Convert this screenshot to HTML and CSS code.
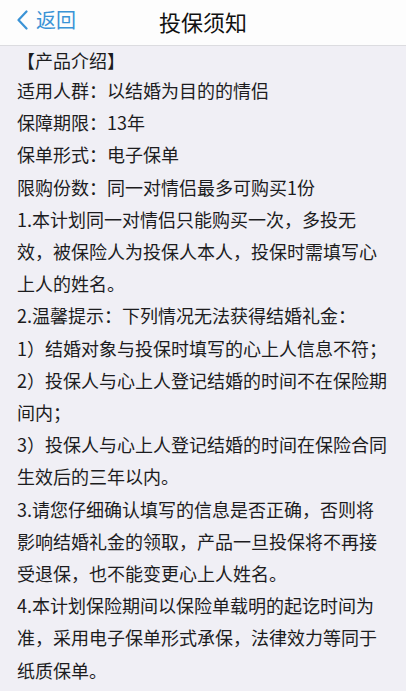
FILE: index.html
```html
<!DOCTYPE html>
<html lang="zh-CN">
<head>
<meta charset="utf-8">
<title>投保须知</title>
<link rel="stylesheet" href="styles.css">
</head>
<body>
<header class="nav">
  <div class="nav-left">
    <a class="back" href="#">
      <svg class="chev" width="12" height="20" viewBox="0 0 12 20"><polyline points="10.5,1.5 2.5,10 10.5,18.5" fill="none" stroke="currentColor" stroke-width="2.2" stroke-linecap="round" stroke-linejoin="round"/></svg>
      <span>返回</span>
    </a>
  </div>
  <h1 class="title">投保须知</h1>
  <div class="nav-right"></div>
</header>
<main class="content">
  <p class="heading">【产品介绍】</p>
  <p>适用人群：以结婚为目的的情侣</p>
  <p>保障期限：13年</p>
  <p>保单形式：电子保单</p>
  <p>限购份数：同一对情侣最多可购买1份</p>
  <p>1.本计划同一对情侣只能购买一次，多投无效，被保险人为投保人本人，投保时需填写心上人的姓名。</p>
  <p>2.温馨提示：下列情况无法获得结婚礼金：</p>
  <p>1）结婚对象与投保时填写的心上人信息不符；</p>
  <p>2）投保人与心上人登记结婚的时间不在保险期间内；</p>
  <p>3）投保人与心上人登记结婚的时间在保险合同生效后的三年以内。</p>
  <p>3.请您仔细确认填写的信息是否正确，否则将影响结婚礼金的领取，产品一旦投保将不再接受退保，也不能变更心上人姓名。</p>
  <p>4.本计划保险期间以保险单载明的起讫时间为准，采用电子保单形式承保，法律效力等同于纸质保单。</p>
</main>
</body>
</html>
```
FILE: styles.css
```css
html, body {
  margin: 0;
  padding: 0;
  background: #f0eff5;
  font-family: "Noto Sans CJK SC", "Noto Sans", sans-serif;
  color: #1c1c1e;
}

.nav {
  display: grid;
  grid-template-columns: 1fr auto 1fr;
  align-items: center;
  height: 45px;
  background: #fdfdfd;
  border-bottom: 1px solid #dcdce0;
}

.nav-left {
  padding-left: 16px;
  padding-bottom: 3px;
}

.back {
  display: inline-flex;
  align-items: center;
  gap: 8px;
  color: #3a93d6;
  text-decoration: none;
  font-size: 20px;
  line-height: 24px;
}

.chev {
  display: block;
}

.title {
  margin: 0;
  padding-bottom: 4px;
  font-size: 22px;
  font-weight: 400;
  line-height: 26px;
  color: #111;
}

.content {
  padding: 0 17px;
}

.content p {
  margin: 0;
  font-size: 18px;
  line-height: 32.2px;
}

.content p.heading {
  line-height: 28px;
}
```
